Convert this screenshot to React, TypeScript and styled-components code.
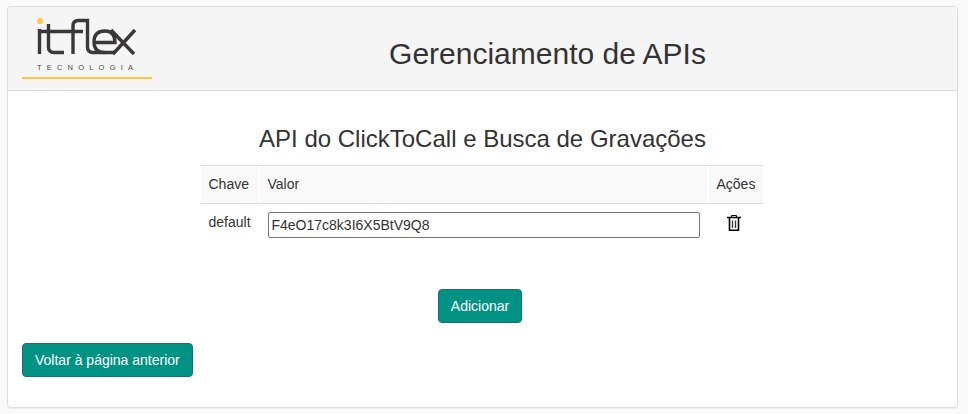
import React from 'react';
import styled, { createGlobalStyle } from 'styled-components';

const GlobalStyle = createGlobalStyle`
  html, body {
    margin: 0;
    padding: 0;
    background: #fafafa;
  }
  * {
    box-sizing: border-box;
  }
  body {
    font-family: "Liberation Sans", Arial, sans-serif;
    font-size: 14px;
    line-height: 20px;
    color: #333;
  }
`;

const Logo = () => (
  <LogoSvg width="100" height="39" viewBox="0 0 100 39" fill="none">
    <circle cx="3" cy="4" r="3" fill="#fdc93f" />
    <g stroke="#3a3839" strokeWidth="3.4">
      <path d="M2.500 12V37" />
      <path d="M11.500 7V30q0 5.500 5.500 5.500h10" />
      <path d="M1 14.500H46" />
      <path d="M36 37V9q0-5.500 5.500-5.500H50.500V30q0 5.500 5.500 5.500h22" />
      <path d="M57 25.500h21q0-11.500-10-11.500q-11 0-11 10.800t11 10.800" />
      <path d="M74 13l23 24M98 13L76 37" />
    </g>
  </LogoSvg>
);

const TrashIcon = () => (
  <svg width="14" height="16" viewBox="0 0 14 16" fill="none" stroke="#000">
    <path d="M0 2.500H14" strokeWidth="1.700" />
    <path d="M4.500 2V0.500h5V2" />
    <path d="M2.500 3V15.200H11.500V3" strokeWidth="1.600" />
    <path d="M5.500 5.500V13M8.500 5.500V13" stroke="#333" strokeWidth="1.300" />
  </svg>
);

export default function App() {
  return (
    <>
      <GlobalStyle />
      <Page>
        <Panel>
          <Header>
            <Brand>
              <Logo />
              <BrandTag>TECNOLOGIA</BrandTag>
            </Brand>
            <PageTitle>Gerenciamento de APIs</PageTitle>
          </Header>
          <Body>
            <SectionTitle>API do ClickToCall e Busca de Gravações</SectionTitle>
            <KeyTable>
              <thead>
                <tr>
                  <HeadCell>Chave</HeadCell>
                  <HeadCell>Valor</HeadCell>
                  <HeadCell>Ações</HeadCell>
                </tr>
              </thead>
              <tbody>
                <tr>
                  <KeyCell>default</KeyCell>
                  <KeyCell>
                    <ValueInput defaultValue="F4eO17c8k3I6X5BtV9Q8" />
                  </KeyCell>
                  <ActionCell>
                    <IconButton aria-label="Remover">
                      <TrashIcon />
                    </IconButton>
                  </ActionCell>
                </tr>
              </tbody>
            </KeyTable>
            <AddRow>
              <AddButton>Adicionar</AddButton>
            </AddRow>
            <BackRow>
              <TealButton>Voltar à página anterior</TealButton>
            </BackRow>
          </Body>
        </Panel>
      </Page>
    </>
  );
}

const Page = styled.div`
  padding: 6px 10px 6px 7px;
  height: 414px;
`;

const Panel = styled.div`
  height: 402px;
  background: #fff;
  border: 1px solid #ddd;
  border-radius: 4px;
  box-shadow: 0 1px 1px rgba(0, 0, 0, 0.05);
  overflow: hidden;
`;

const Header = styled.div`
  display: flex;
  align-items: flex-start;
  height: 84px;
  padding: 9px 14px 0;
  background: #f5f5f5;
  border-bottom: 1px solid #ddd;
`;

const Brand = styled.div`
  flex: none;
  width: 130px;
  height: 63px;
  padding: 1px 0 0 15px;
  border-bottom: 2px solid #fdc93f;
`;

const LogoSvg = styled.svg`
  display: block;
`;

const BrandTag = styled.div`
  margin-top: 7px;
  font-size: 7.5px;
  line-height: 9px;
  letter-spacing: 5.2px;
  white-space: nowrap;
  color: #4a4849;
`;

const PageTitle = styled.h1`
  flex: 1;
  margin: 21px 0 0;
  font-size: 30px;
  font-weight: 400;
  line-height: 33px;
  text-align: center;
  color: #333;
`;

const Body = styled.div`
  padding: 35px 16px 0 14px;
`;

const SectionTitle = styled.h2`
  margin: 0;
  padding-left: 2px;
  font-size: 24px;
  font-weight: 400;
  line-height: 26px;
  text-align: center;
  color: #333;
`;

const KeyTable = styled.table`
  margin: 13px auto 0;
  width: 562px;
  border-collapse: separate;
  border-spacing: 0;
  table-layout: fixed;
`;

const HeadCell = styled.th`
  height: 39px;
  padding: 0 8px 2px;
  background: #f9f9f9;
  border-top: 1px solid #ddd;
  border-bottom: 1px solid #ddd;
  border-right: 2px solid #fff;
  font-weight: 400;
  text-align: left;
  &:first-child {
    width: 59px;
  }
  &:last-child {
    width: 54px;
    border-right: 0;
  }
`;

const KeyCell = styled.td`
  padding: 8px 8px 0;
  vertical-align: top;
`;

const ActionCell = styled(KeyCell)`
  text-align: center;
  padding: 11px 4px 0 0;
`;

const ValueInput = styled.input`
  display: block;
  width: 432px;
  height: 26px;
  padding: 1px 3px;
  border: 1px solid #767676;
  border-radius: 2px;
  background: #fff;
  font-family: "Liberation Sans", Arial, sans-serif;
  font-size: 14px;
  color: #333;
  outline: none;
`;

const IconButton = styled.button`
  padding: 0;
  border: 0;
  background: none;
  line-height: 0;
`;

const AddRow = styled.div`
  display: flex;
  justify-content: center;
  margin-top: 51px;
  padding-right: 3px;
`;

const BackRow = styled.div`
  display: flex;
  margin-top: 20px;
`;

const TealButton = styled.button`
  height: 34px;
  padding: 6px 12px;
  background: #009282;
  border: 1px solid #1b6d85;
  border-radius: 4px;
  font-family: "Liberation Sans", Arial, sans-serif;
  font-size: 14px;
  line-height: 20px;
  color: #fff;
`;

const AddButton = styled(TealButton)`
  width: 84px;
  padding: 6px 0;
`;
